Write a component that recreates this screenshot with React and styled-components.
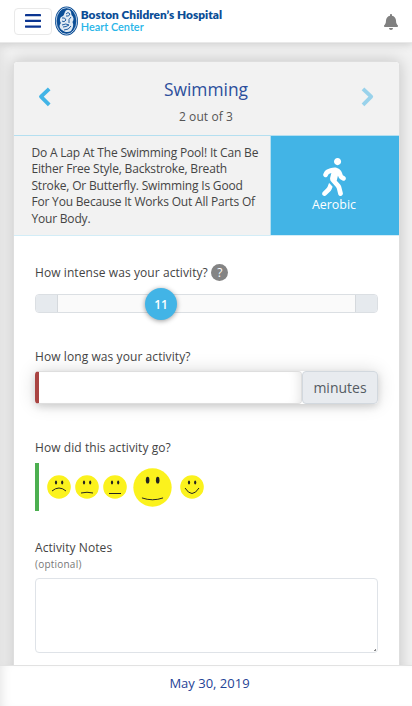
import React from 'react';
import styled, { createGlobalStyle } from 'styled-components';
import { FaBell, FaWalking } from 'react-icons/fa';

const GlobalStyle = createGlobalStyle`
  * { box-sizing: border-box; }
  body {
    margin: 0;
    background: #f2f2f2;
    font-family: 'Open Sans', 'Noto Sans', sans-serif;
    font-size: 12px;
    color: #444;
    overflow: hidden;
  }
`;

const Page = styled.div`
  display: flex;
  flex-direction: column;
  height: 706px;
  width: 412px;
  overflow: hidden;
`;

const TopBar = styled.header`
  display: flex;
  align-items: flex-start;
  flex: none;
  height: 43px;
  padding: 7px 13px 0 14px;
  background: #fff;
  border-bottom: 1px solid #e9e9e9;
  box-shadow: 0 1px 9px rgba(0, 0, 0, 0.16);
  z-index: 2;
`;

const MenuButton = styled.button`
  display: flex;
  align-items: center;
  justify-content: center;
  width: 38px;
  height: 27px;
  margin-top: 1px;
  padding: 0;
  border: 1px solid #e9e9e9;
  border-radius: 4px;
  background: #fff;
  color: #0b3591;
`;

const MenuGlyph = styled.svg`
  display: block;
  margin-top: -2px;
`;

const Logo = styled.svg`
  display: block;
  margin: -2px 0 0 2px;
`;

const BellButton = styled.div`
  margin: 7px 0 0 auto;
  color: #808080;
  line-height: 0;
`;

const Main = styled.main`
  flex: 1;
  min-height: 0;
  padding: 18px 12px 0 13px;
  background: #f2f2f2;
  overflow: hidden;
  box-shadow: inset 8px 0 12px -6px rgba(0, 0, 0, 0.08);
`;

const Card = styled.section`
  height: 660px;
  border: 1px solid #dedede;
  border-radius: 4px 4px 0 0;
  background: #fff;
  box-shadow: 0 0 16px rgba(0, 0, 0, 0.2);
`;

const CardHeader = styled.div`
  display: flex;
  justify-content: space-between;
  height: 74px;
  padding: 25px 24px 0 23px;
  background: #f2f2f2;
  border-bottom: 1px solid #b4dff0;
  border-radius: 4px 4px 0 0;
`;

const Chevron = styled.svg`
  display: block;
  opacity: ${(p) => (p.$faded ? 0.5 : 1)};
`;

const Heading = styled.div`
  margin-top: -10px;
  text-align: center;
`;

const Title = styled.h1`
  margin: 0;
  font-size: 17.4px;
  line-height: 24px;
  font-weight: 400;
  color: #2c4f9c;
`;

const Counter = styled.div`
  margin-top: 7px;
  line-height: 18px;
  font-size: 12px;
  letter-spacing: 0.1px;
  color: #555;
`;

const Info = styled.div`
  display: flex;
  height: 100px;
  border-bottom: 1px solid #d3edf7;
`;

const Description = styled.p`
  flex: 1;
  margin: 0;
  padding: 9px 0 0 17.4px;
  background: #f2f2f2;
  border-right: 1px solid #b4dff0;
  font-size: 12px;
  letter-spacing: -0.18px;
  line-height: 16.4px;
  color: #444;
  white-space: nowrap;
`;

const Kind = styled.div`
  display: flex;
  flex-direction: column;
  align-items: center;
  width: 128px;
  padding: 22px 2px 0 0;
  background: #42b4e6;
  color: #fff;
  font-size: 12.4px;
  line-height: 17px;
`;

const Form = styled.div`
  padding: 0 21px;
`;

const Label = styled.div`
  display: flex;
  align-items: center;
  height: 18px;
  margin-top: ${(p) => p.$top}px;
  color: #444;
  font-size: 12px;
  letter-spacing: 0.08px;
`;

const Help = styled.span`
  display: flex;
  align-items: center;
  justify-content: center;
  width: 17px;
  height: 17px;
  margin-left: 3.5px;
  border-radius: 50%;
  background: #848484;
  color: #fff;
  font-size: 12px;
`;

const Slider = styled.div`
  position: relative;
  display: flex;
  justify-content: space-between;
  height: 19px;
  margin-top: 13px;
  border: 1px solid #dbdfe3;
  border-radius: 4px;
  background: #fafafa;
`;

const SliderEnd = styled.div`
  width: 22px;
  background: #e6eaee;
  border: solid #d5d9dd;
  border-width: ${(p) => (p.$right ? '0 0 0 1px' : '0 1px 0 0')};
  border-radius: ${(p) => (p.$right ? '0 3px 3px 0' : '3px 0 0 3px')};
`;

const Thumb = styled.div`
  position: absolute;
  left: 109px;
  top: -7px;
  display: flex;
  align-items: center;
  justify-content: center;
  width: 32px;
  height: 32px;
  border-radius: 50%;
  background: #42b4e6;
  box-shadow: 0 1px 5px rgba(0, 0, 0, 0.4);
  color: #fff;
  font-size: 12px;
  font-weight: 600;
`;

const Duration = styled.div`
  display: flex;
  height: 33px;
  margin-top: 6px;
  border-radius: 4px;
  box-shadow: 0 0 18px rgba(0, 0, 0, 0.15), 0 3px 7px rgba(0, 0, 0, 0.12);
`;

const DurationInput = styled.input`
  flex: 1;
  min-width: 0;
  border: 1px solid #dedede;
  border-left: 4px solid #a94442;
  border-radius: 4px;
  background: #fff;
  box-shadow: inset -10px 0 12px -9px rgba(0, 0, 0, 0.12);
`;

const Unit = styled.span`
  width: 76px;
  border: 1px solid #d2d8de;
  border-radius: 4px;
  background: #e8ebef;
  color: #555b63;
  font-size: 14px;
  line-height: 32px;
  text-align: center;
`;

const Faces = styled.div`
  display: flex;
  align-items: center;
  height: 48px;
  margin-top: 7px;
  padding-left: 8px;
  border-left: 4px solid #4caf50;
`;

const Face = styled.svg`
  display: block;
  flex: none;
  width: ${(p) => (p.$selected ? 39 : 24)}px;
  height: ${(p) => (p.$selected ? 39 : 24)}px;
  margin-right: ${(p) => p.$gap}px;
`;

const Optional = styled.div`
  height: 15px;
  margin-top: 1px;
  font-size: 10px;
  letter-spacing: 0.22px;
  line-height: 15px;
  color: #777;
`;

const Notes = styled.textarea`
  display: block;
  width: 100%;
  height: 75px;
  margin-top: 6px;
  border: 1px solid #dfe3e8;
  border-radius: 4px;
  background: linear-gradient(135deg, transparent 55%, #888 56%) right 1px bottom 1px / 3px 3px no-repeat #fff;
  resize: none;
`;

const Footer = styled.footer`
  flex: none;
  height: 41px;
  border-top: 1px solid #e2e2e2;
  background: #fff;
  box-shadow: inset 9px 0 12px -8px rgba(0, 0, 0, 0.12);
  color: #1f4396;
  font-size: 13px;
  line-height: 35px;
  text-align: center;
  padding-left: 7px;
  z-index: 1;
`;

const faces = [
  { id: 'sad', mouth: 'M5 16 Q12 10 19 16', gap: 4 },
  { id: 'unhappy', mouth: 'M6 18 Q12 16.5 18 18', gap: 4 },
  { id: 'neutral', mouth: 'M6 18.5 H18', gap: 6 },
  { id: 'content', mouth: 'M5.5 18.4 Q12 20.7 18.5 18.4', gap: 7.5, selected: true },
  { id: 'happy', mouth: 'M5 13 Q12 24 19 13', gap: 0 },
];

const Arrow = ({ right }) => (
  <Chevron $faded={right} width="14" height="20" viewBox="0 0 14 20">
    <path
      d={right ? 'M2 1.8 L10.2 9.7 L2 17.8' : 'M12.2 1.8 L4 9.7 L12.2 17.8'}
      fill="none"
      stroke="#42b4e6"
      strokeWidth="3.8"
      strokeLinejoin="round"
    />
  </Chevron>
);

const MenuIcon = () => (
  <MenuGlyph width="16" height="14" viewBox="0 0 16 14" fill="currentColor">
    <rect y="0" width="16" height="2.3" rx="0.4" />
    <rect y="5.7" width="16" height="2.3" rx="0.4" />
    <rect y="11.4" width="16" height="2.3" rx="0.4" />
  </MenuGlyph>
);

const HospitalLogo = () => (
  <Logo width="170" height="32" viewBox="0 0 170 32">
    <ellipse cx="12.5" cy="16" rx="11.5" ry="14.6" fill="#0a4d96" />
    <ellipse cx="12.5" cy="16" rx="10.3" ry="13.3" fill="none" stroke="#fff" strokeWidth="0.7" />
    <path d="M11 7 C12 4 16 4 17 7 L17.5 10 C20 12 20 15 18.5 17 C20 20 19 23 17 26 C14 28 10 27 8 25 C5 23 5 20 7 18 C5 15 6 12 9 11 C10 10 10 9 11 7 Z" fill="#dfe9f3" />
    <g fill="none" stroke="#0a4d96" strokeWidth="0.9">
      <path d="M12 9 Q14 6 16 9 Q15 12 12 11" />
      <path d="M8 13 Q11 12 12 15 Q10 18 8 16 M17 12 Q14 14 15 18" />
      <path d="M8 20 Q12 18 15 20 Q12 22 9 22 M10 25 Q15 25 17 21" />
    </g>
    <text x="26.7" y="14.3" fontFamily="Lato, sans-serif" fontWeight="800" fontSize="11.8" fill="#0a4d96" textLength="141.3" lengthAdjust="spacingAndGlyphs">Boston Children’s Hospital</text>
    <text x="26.7" y="25.8" fontFamily="Lato, sans-serif" fontWeight="600" fontSize="11" fill="#27b5e8" textLength="63" lengthAdjust="spacingAndGlyphs">Heart Center</text>
  </Logo>
);

export default function App() {
  return (
    <Page>
      <GlobalStyle />
      <TopBar>
        <MenuButton aria-label="Menu"><MenuIcon /></MenuButton>
        <HospitalLogo />
        <BellButton><FaBell size={16} /></BellButton>
      </TopBar>
      <Main>
        <Card>
          <CardHeader>
            <Arrow />
            <Heading>
              <Title>Swimming</Title>
              <Counter>2 out of 3</Counter>
            </Heading>
            <Arrow right />
          </CardHeader>
          <Info>
            <Description>
              Do A Lap At The Swimming Pool! It Can Be<br />
              Either Free Style, Backstroke, Breath<br />
              Stroke, Or Butterfly. Swimming Is Good<br />
              For You Because It Works Out All Parts Of<br />
              Your Body.
            </Description>
            <Kind><FaWalking size={38} />Aerobic</Kind>
          </Info>
          <Form>
            <Label $top={27}>How intense was your activity?<Help>?</Help></Label>
            <Slider><SliderEnd /><SliderEnd $right /><Thumb>11</Thumb></Slider>
            <Label $top={34}>How long was your activity?</Label>
            <Duration><DurationInput aria-label="Minutes" /><Unit>minutes</Unit></Duration>
            <Label $top={34}>How did this activity go?</Label>
            <Faces>
              {faces.map((f) => (
                <Face key={f.id} $selected={f.selected} $gap={f.gap} viewBox="0 0 24 24">
                  <circle cx="12" cy="12" r="11.8" fill="#fbf21d" />
                  <ellipse cx="9" cy="7.5" rx="1.1" ry="2.1" fill="#222" />
                  <ellipse cx="15.2" cy="7.5" rx="1.1" ry="2.1" fill="#222" />
                  <path d={f.mouth} fill="none" stroke="#222" strokeWidth={f.selected ? 0.6 : 1} />
                </Face>
              ))}
            </Faces>
            <Label $top={27}>Activity Notes</Label>
            <Optional>(optional)</Optional>
            <Notes aria-label="Activity notes" />
          </Form>
        </Card>
      </Main>
      <Footer>May 30, 2019</Footer>
    </Page>
  );
}
